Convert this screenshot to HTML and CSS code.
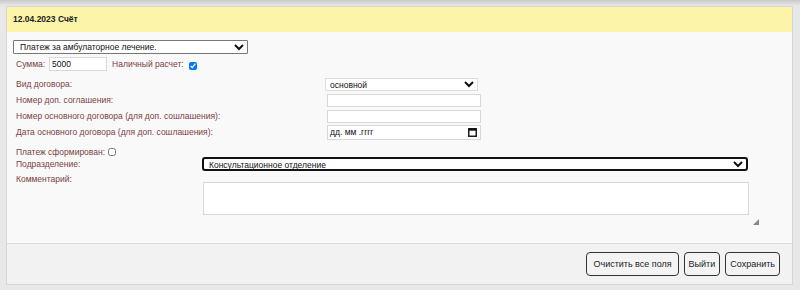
FILE: index.html
```html
<!DOCTYPE html>
<html lang="ru">
<head>
    <meta charset="UTF-8">
    <title>Счёт</title>
    <link rel="stylesheet" href="styles.css">
</head>
<body>
    <div class="dialog">
        <div class="dlg-head">12.04.2023 Счёт</div>

        <div class="dlg-body">
            <select class="pay-type">
                <option>Платеж за амбулаторное лечение.</option>
            </select>

            <div class="sum-row">
                <label>Сумма:</label>
                <input type="text" class="sum" value="5000">
                <label class="cash">Наличный расчет:</label>
                <input type="checkbox" class="chk" checked>
            </div>

            <div class="contract">
                <label>Вид договора:</label>
                <select class="kind"><option>основной</option></select>

                <label>Номер доп. соглашения:</label>
                <input type="text" class="field">

                <label>Номер основного договора (для доп. сошлашения):</label>
                <input type="text" class="field">

                <label>Дата основного договора (для доп. сошлашения):</label>
                <div class="field date">
                    <span>дд. мм .гггг</span>
                    <svg width="9" height="10" viewBox="0 0 9 10"><rect x="0.75" y="1.75" width="7.5" height="7.5" fill="none" stroke="#111" stroke-width="1.4"/><rect x="0.5" y="1.5" width="8" height="2.2" fill="#111"/></svg>
                </div>
            </div>

            <div class="formed">
                <label>Платеж сформирован:</label>
                <input type="checkbox" class="chk">
            </div>

            <div class="dept">
                <label>Подразделение:</label>
                <select class="dept-select"><option>Консультационное отделение</option></select>
            </div>

            <div class="comment">
                <label>Комментарий:</label>
                <div class="comment-box">
                    <textarea></textarea>
                    <svg class="grip" width="6" height="6" viewBox="0 0 6 6"><path d="M6 0 L6 6 L0 6 Z" fill="#888"/></svg>
                </div>
            </div>
        </div>

        <div class="dlg-foot">
            <button class="wide">Очистить все поля</button>
            <button>Выйти</button>
            <button>Сохранить</button>
        </div>
    </div>
</body>
</html>
```

FILE: styles.css
```css
body {
    margin: 0;
    padding: 6px 7px 5px 6px;
    font-family: 'Liberation Sans', Arial, sans-serif;
    font-size: 8.5px;
    background: linear-gradient(#c9c9c9, #e7e8e7 6px);
    background-color: #e7e8e7;
    height: 279px;
}
.dialog {
    border: 1px solid #d6d6d6;
    background-color: #f9f9f9;
}
.dlg-head {
    background-color: #fcf4a9;
    height: 25px;
    line-height: 25px;
    padding-left: 6px;
    font-weight: bold;
    color: #222;
}
.dlg-body {
    padding: 8px 44px 20px 6px;
    height: 183px;
}
label {
    color: #7a3f3f;
    flex-shrink: 0;
}
select {
    font-family: 'Liberation Sans', Arial, sans-serif;
    font-size: 8.5px;
    background-color: white;
    color: #111;
    padding: 0 2px;
}
.pay-type {
    display: block;
    width: 235px;
    height: 14px;
    border: 1px solid #777;
    border-radius: 1px;
}
input[type="text"] {
    font-family: 'Liberation Sans', Arial, sans-serif;
    font-size: 8.5px;
    border: 1px solid #d8d8d8;
    background-color: white;
    padding: 0 2px;
    box-sizing: border-box;
}
.sum-row {
    display: flex;
    align-items: center;
    height: 14px;
    margin-top: 3px;
    padding-left: 3px;
}
.sum {
    width: 58px;
    height: 14px;
    margin-left: 4px;
    color: #111;
}
.cash {
    margin-left: 5px;
}
.chk {
    width: 8px;
    height: 8px;
    margin: 3px 0 0 5px;
}
.contract {
    display: grid;
    grid-template-columns: 309px 154px;
    grid-auto-rows: 16px;
    align-items: center;
    margin-top: 5px;
    padding-left: 3px;
}
.kind {
    width: 153px;
    height: 13px;
    border: 1px solid #ddd;
    padding: 0;
}
.field {
    width: 154px;
    height: 13px;
    margin-left: 2px;
}
.date {
    box-sizing: border-box;
    height: 15px;
    border: 1px solid #d8d8d8;
    background-color: white;
    display: flex;
    align-items: center;
    justify-content: space-between;
    padding: 0 3px 0 2px;
    color: #111;
}
.date svg {
    display: block;
}
.formed {
    display: flex;
    align-items: center;
    height: 10px;
    margin-top: 7px;
    padding-left: 3px;
}
.formed .chk {
    margin: 0 0 0 3px;
}
.dept {
    display: flex;
    align-items: center;
    height: 14px;
    margin-top: 0;
    padding-left: 3px;
}
.dept label {
    width: 186px;
}
.dept-select {
    width: 548px;
    height: 14px;
    border: 2px solid #111;
    border-radius: 3px;
    padding: 0 1px;
}
.comment {
    display: flex;
    padding-left: 3px;
    margin-top: 2px;
}
.comment label {
    width: 187px;
    line-height: 12px;
}
.comment-box {
    display: flex;
    align-items: flex-end;
    margin-top: 9px;
}
.comment-box textarea {
    width: 546px;
    height: 33px;
    box-sizing: border-box;
    border: 1px solid #d8d8d8;
    background-color: white;
    resize: none;
    margin: 0;
    display: block;
}
.grip {
    display: block;
    margin: 0 0 -10px 4px;
}
.dlg-foot {
    background-color: #f2f2f2;
    border-top: 1px solid #dcdcdc;
    height: 40px;
    display: flex;
    align-items: center;
    justify-content: flex-end;
    gap: 5px;
    padding-right: 12px;
}
button {
    font-family: 'Liberation Sans', Arial, sans-serif;
    font-size: 9px;
    color: #222;
    background-color: #f4f4f4;
    border: 1px solid #333;
    border-radius: 4px;
    height: 24px;
    padding: 0 4px;
}
button.wide {
    padding: 0 6px;
}
```
